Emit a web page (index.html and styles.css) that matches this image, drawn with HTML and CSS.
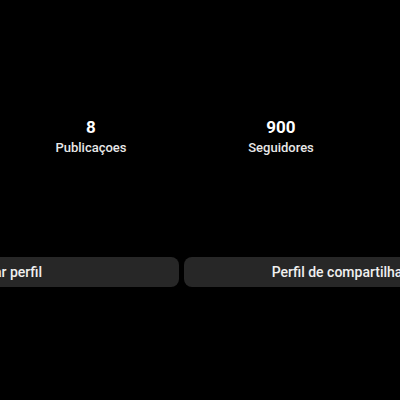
FILE: index.html
```html
<!DOCTYPE html>
<html lang="pt-BR">
<head>
  <meta charset="UTF-8">
  <meta name="viewport" content="width=device-width, initial-scale=1.0">
  <title>Perfil</title>
  <link rel="stylesheet" href="styles.css">
</head>
<body>

<main class="perfil">
  <div class="estatisticas">
    <div class="item">
      <strong class="numero">8</strong>
      <span class="legenda">Publicaçoes</span>
    </div>
    <div class="item">
      <strong class="numero">900</strong>
      <span class="legenda">Seguidores</span>
    </div>
  </div>

  <div class="botoes">
    <button class="botao" type="button">Editar perfil</button>
    <button class="botao" type="button">Perfil de compartilhamento</button>
  </div>
</main>

</body>
</html>
```

FILE: styles.css
```css
* {
  box-sizing: border-box;
}

body {
  margin: 0;
  background: #000;
  color: #fff;
  font-family: Roboto, sans-serif;
}

.perfil {
  padding-top: 116px;
  overflow: hidden;
}

.estatisticas {
  display: grid;
  grid-template-columns: 1fr 1fr;
  margin: 0 24px 0 -4px;
  text-align: center;
}

.numero {
  display: block;
  font-size: 17px;
  font-weight: 700;
  line-height: 22px;
}

.legenda {
  display: block;
  color: #e8e8e8;
  font-size: 13px;
  font-weight: 500;
  line-height: 20px;
}

/* a linha de botoes passa das bordas da tela */
.botoes {
  display: flex;
  gap: 5px;
  margin: 99px -130px 0 -167px;
}

.botao {
  flex: 1;
  height: 30px;
  padding: 0;
  border: none;
  border-radius: 8px;
  background: #272727;
  color: #f0f0f0;
  font-family: inherit;
  font-size: 14px;
  font-weight: 500;
  cursor: pointer;
}
```
